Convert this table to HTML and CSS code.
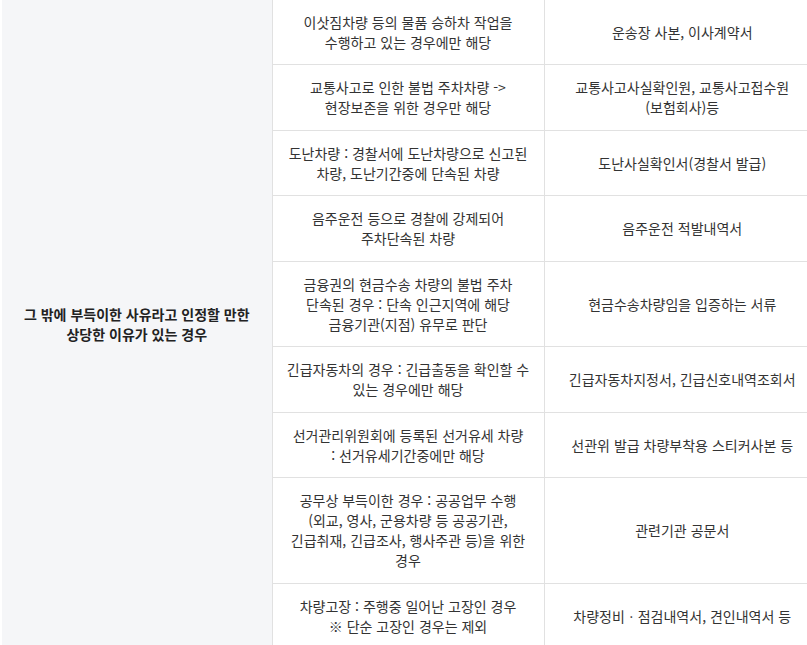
FILE: index.html
```html
<!DOCTYPE html>
<html lang="ko">

<head>
    <meta charset="UTF-8">
    <meta name="viewport" content="width=device-width, initial-scale=1.0">
    <title>주정차 단속 의견진술 인정 사유</title>
    <link rel="stylesheet" href="styles.css">
</head>

<body>
    <div class="table-wrap">
        <table class="reason-table">
            <colgroup>
                <col class="col-reason">
                <col class="col-detail">
                <col class="col-docs">
            </colgroup>
            <tbody>
                <tr>
                    <th rowspan="9" class="reason">그 밖에 부득이한 사유라고 인정할 만한<br>상당한 이유가 있는 경우</th>
                    <td>이삿짐차량 등의 물품 승하차 작업을<br>수행하고 있는 경우에만 해당</td>
                    <td>운송장 사본, 이사계약서</td>
                </tr>
                <tr>
                    <td>교통사고로 인한 불법 주차차량 -&gt;<br>현장보존을 위한 경우만 해당</td>
                    <td>교통사고사실확인원, 교통사고접수원<br>(보험회사)등</td>
                </tr>
                <tr>
                    <td>도난차량 : 경찰서에 도난차량으로 신고된<br>차량, 도난기간중에 단속된 차량</td>
                    <td>도난사실확인서(경찰서 발급)</td>
                </tr>
                <tr>
                    <td>음주운전 등으로 경찰에 강제되어<br>주차단속된 차량</td>
                    <td>음주운전 적발내역서</td>
                </tr>
                <tr>
                    <td>금융권의 현금수송 차량의 불법 주차<br>단속된 경우 : 단속 인근지역에 해당<br>금융기관(지점) 유무로 판단</td>
                    <td>현금수송차량임을 입증하는 서류</td>
                </tr>
                <tr>
                    <td>긴급자동차의 경우 : 긴급출동을 확인할 수<br>있는 경우에만 해당</td>
                    <td>긴급자동차지정서, 긴급신호내역조회서</td>
                </tr>
                <tr>
                    <td>선거관리위원회에 등록된 선거유세 차량<br>: 선거유세기간중에만 해당</td>
                    <td>선관위 발급 차량부착용 스티커사본 등</td>
                </tr>
                <tr>
                    <td>공무상 부득이한 경우 : 공공업무 수행<br>(외교, 영사, 군용차량 등 공공기관,<br>긴급취재, 긴급조사, 행사주관 등)을 위한<br>경우</td>
                    <td>관련기관 공문서</td>
                </tr>
                <tr>
                    <td>차량고장 : 주행중 일어난 고장인 경우<br>※ 단순 고장인 경우는 제외</td>
                    <td>차량정비ㆍ점검내역서, 견인내역서 등</td>
                </tr>
            </tbody>
        </table>
    </div>
</body>

</html>
```

FILE: styles.css
```css
* {
    margin: 0;
    padding: 0;
    box-sizing: border-box;
}

body {
    font-family: "Noto Sans CJK KR", "Noto Sans", sans-serif;
    background: #ffffff;
    color: #333333;
    overflow: hidden;
}

.table-wrap {
    width: 821px;
    margin-top: -1.5px;
    padding-left: 2px;
}

.reason-table {
    width: 100%;
    border-collapse: collapse;
    table-layout: fixed;
    font-size: 14px;
    line-height: 20px;
}

.col-reason {
    width: 270px;
}

.col-detail {
    width: 272px;
}

.reason-table th,
.reason-table td {
    border: 1px solid #e1e1e1;
    padding: 12px 8px 12.5px;
    text-align: center;
    vertical-align: middle;
    white-space: nowrap;
    font-weight: normal;
}

.reason-table .reason {
    background: #f5f6f8;
    color: #222222;
    font-weight: bold;
    border-left: none;
}
```
